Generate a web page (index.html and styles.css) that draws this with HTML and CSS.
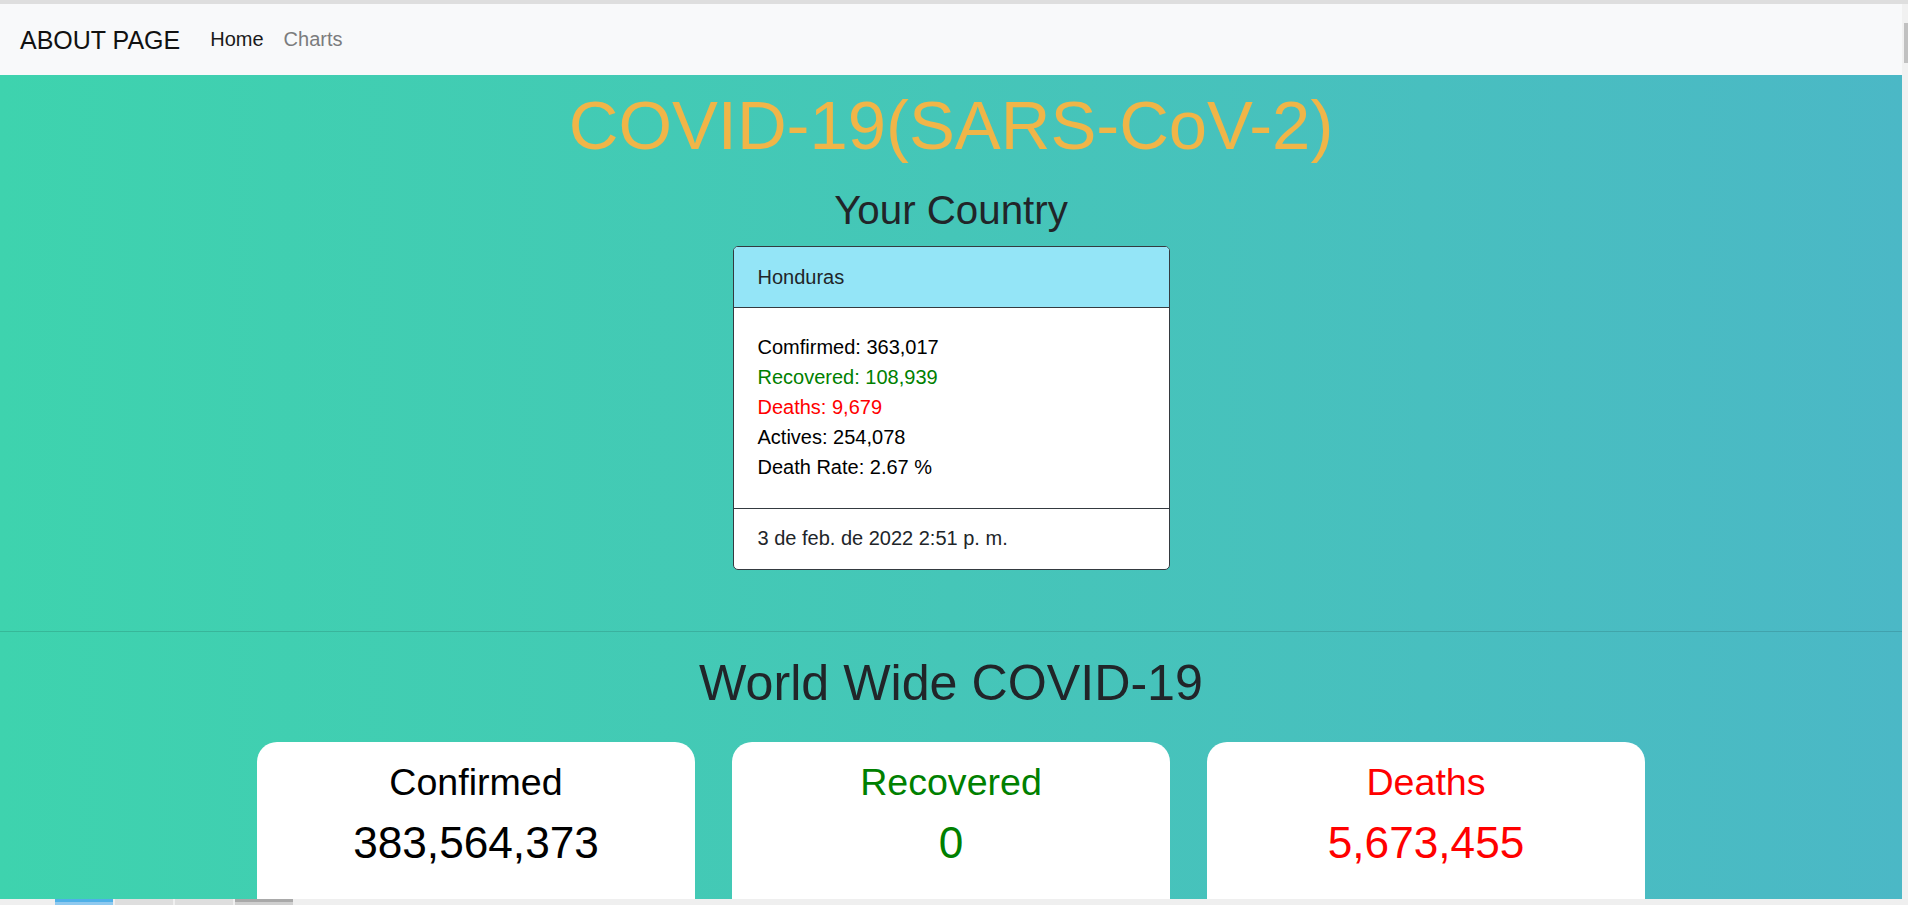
FILE: index.html
```html
<!DOCTYPE html>
<html lang="es">
<head>
<meta charset="utf-8">
<title>COVID-19</title>
<link rel="stylesheet" href="styles.css">
</head>
<body>
<div class="topline"></div>
<div class="viewport">
  <div class="page">
    <nav class="navbar">
      <a class="brand" href="#">ABOUT PAGE</a>
      <ul class="nav">
        <li class="nav-link active">Home</li>
        <li class="nav-link">Charts</li>
      </ul>
    </nav>
    <main class="hero">
      <h1 class="title">COVID-19(SARS-CoV-2)</h1>
      <h2 class="subtitle">Your Country</h2>
      <div class="country-card">
        <div class="card-header">Honduras</div>
        <div class="card-body">
          <p class="line">Comfirmed: 363,017</p>
          <p class="line green">Recovered: 108,939</p>
          <p class="line red">Deaths: 9,679</p>
          <p class="line">Actives: 254,078</p>
          <p class="line">Death Rate: 2.67 %</p>
        </div>
        <div class="card-footer">3 de feb. de 2022 2:51 p. m.</div>
      </div>
      <hr class="divider">
      <h2 class="world-title">World Wide COVID-19</h2>
      <div class="stats">
        <div class="stat">
          <h3 class="stat-label">Confirmed</h3>
          <p class="stat-value">383,564,373</p>
        </div>
        <div class="stat green">
          <h3 class="stat-label">Recovered</h3>
          <p class="stat-value">0</p>
        </div>
        <div class="stat red">
          <h3 class="stat-label">Deaths</h3>
          <p class="stat-value">5,673,455</p>
        </div>
      </div>
    </main>
  </div>
  <div class="vscroll"><div class="thumb"></div></div>
</div>
<div class="hscroll">
  <span class="seg seg-start"></span>
  <span class="seg seg-blue"></span>
  <span class="seg seg-light"></span>
  <span class="seg seg-light"></span>
  <span class="seg seg-dark"></span>
</div>
</body>
</html>
```
FILE: styles.css
```css
* { box-sizing: border-box; }

html, body {
  margin: 0;
  padding: 0;
}

body {
  height: 905px;
  overflow: hidden;
  display: flex;
  flex-direction: column;
  font-family: "Liberation Sans", Arial, sans-serif;
  color: #212529;
  background: #efefef;
}

.topline {
  height: 4px;
  flex: none;
  background: #dedede;
}

.viewport {
  flex: none;
  height: 895px;
  display: flex;
}

.page {
  flex: 1;
  min-width: 0;
  overflow: hidden;
  display: flex;
  flex-direction: column;
}

.vscroll {
  flex: none;
  width: 6px;
  background: #f1f1f1;
  padding-top: 19px;
  display: flex;
  justify-content: flex-end;
  align-items: flex-start;
}

.thumb {
  width: 4px;
  height: 40px;
  background: #c1c1c1;
}

.hscroll {
  flex: none;
  height: 6px;
  display: flex;
  gap: 2px;
  background: #efefef;
}

.seg { display: block; height: 6px; }
.seg-start { width: 53px; background: #efefef; }
.seg-blue { width: 58px; background: linear-gradient(#4fb0e8 0 3px, #8fc9ef 3px); }
.seg-light { width: 58px; background: #dedede; }
.seg-dark { width: 58px; background: linear-gradient(#a9a9a9 0 3px, #cfcfcf 3px); }

/* navbar */
.navbar {
  flex: none;
  height: 71px;
  background: #f8f9fa;
  display: flex;
  align-items: center;
  padding-left: 20px;
}

.brand {
  font-size: 25px;
  line-height: 36px;
  color: #111;
  text-decoration: none;
  margin-right: 30px;
}

.nav {
  list-style: none;
  margin: 0;
  padding: 0;
  display: flex;
  gap: 20px;
}

.nav-link {
  font-size: 20px;
  line-height: 28.8px;
  color: #7b7c7d;
}

.nav-link.active { color: #1a1a1a; }

/* hero */
.hero {
  flex: 1;
  background: linear-gradient(to right, #3ed3ae 0%, #45c6b8 50%, #4bb8c6 100%);
  display: flex;
  flex-direction: column;
  align-items: center;
}

.title {
  margin: 0;
  padding-top: 11px;
  font-size: 68.8px;
  line-height: 80.4px;
  font-weight: 400;
  color: #f0b548;
}

.subtitle {
  margin: 22px 0 11px;
  font-size: 40.3px;
  line-height: 46.8px;
  font-weight: 400;
  color: #212529;
}

.country-card {
  width: 437px;
  background: #fff;
  border: 1px solid #343a40;
  border-radius: 5px;
  overflow: hidden;
}

.card-header {
  background: #94e5f7;
  padding: 15px 24px;
  font-size: 20px;
  line-height: 30px;
  border-bottom: 1px solid #343a40;
  color: #212529;
}

.card-body {
  padding: 24px 24px 26px;
}

.line {
  margin: 0;
  font-size: 20px;
  line-height: 30px;
  color: #000;
}

.line.green { color: #008000; }
.line.red { color: #ff0000; }

.card-footer {
  border-top: 1px solid #343a40;
  padding: 14px 24px 16px;
  font-size: 20px;
  line-height: 30px;
  color: #212529;
}

.divider {
  align-self: stretch;
  margin: 61px 0 0;
  border: 0;
  border-top: 1px solid rgba(0, 0, 0, 0.12);
  height: 0;
}

.world-title {
  margin: 21px 0 29px;
  font-size: 50.2px;
  line-height: 60px;
  font-weight: 400;
  color: #212529;
}

.stats {
  display: flex;
  gap: 37px;
}

.stat {
  width: 438px;
  min-height: 220px;
  background: #fff;
  border-radius: 20px;
  text-align: center;
  padding-top: 18px;
  color: #000;
}

.stat.green { color: #008000; }
.stat.red { color: #ff0000; }

.stat-label {
  margin: 0;
  font-size: 37.6px;
  line-height: 44px;
  font-weight: 400;
}

.stat-value {
  margin: 13px 0 0;
  font-size: 44.2px;
  line-height: 52px;
}
```
